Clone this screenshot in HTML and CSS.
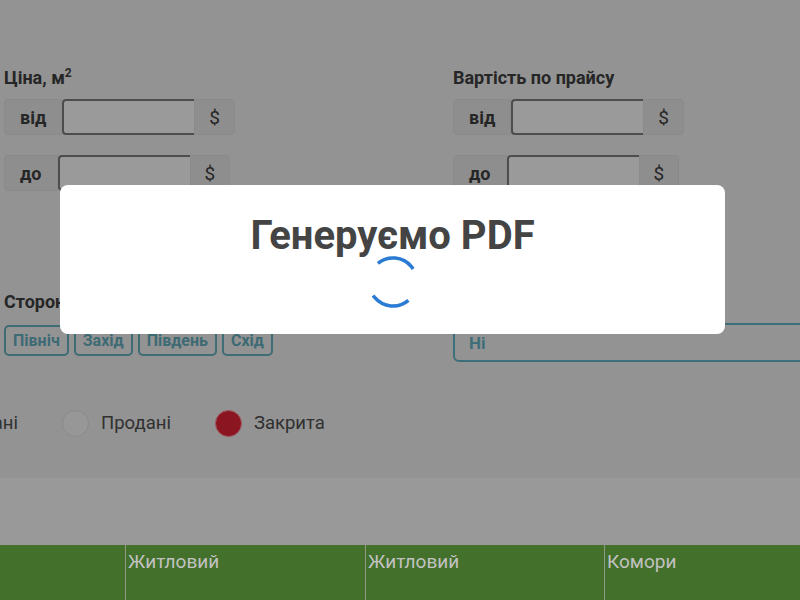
FILE: index.html
```html
<!DOCTYPE html>
<html lang="uk">
<head>
    <meta charset="UTF-8">
    <meta name="viewport" content="width=device-width, initial-scale=1.0">
    <title>Фільтри</title>
    <link rel="stylesheet" href="styles.css">
</head>
<body>

<div class="page">
    <!-- Filters -->
    <div class="filters">
        <div class="filter-col">
            <div class="filter-label">Ціна, м<sup>2</sup></div>
            <div class="input-group">
                <span class="addon">від</span>
                <input class="field" type="text">
                <span class="addon addon-end">$</span>
            </div>
            <div class="input-group">
                <span class="addon">до</span>
                <input class="field" type="text">
                <span class="addon addon-end">$</span>
            </div>
        </div>

        <div class="filter-col">
            <div class="filter-label">Вартість по прайсу</div>
            <div class="input-group">
                <span class="addon">від</span>
                <input class="field" type="text">
                <span class="addon addon-end">$</span>
            </div>
            <div class="input-group">
                <span class="addon">до</span>
                <input class="field" type="text">
                <span class="addon addon-end">$</span>
            </div>
        </div>

        <div class="filter-col">
            <div class="filter-label">Сторона світу</div>
            <div class="toggle-row">
                <button class="toggle">Північ</button>
                <button class="toggle">Захід</button>
                <button class="toggle">Південь</button>
                <button class="toggle">Схід</button>
            </div>
        </div>

        <div class="filter-col">
            <div class="filter-label">Наявність тераси</div>
            <div class="select-box">Ні</div>
        </div>
    </div>

    <!-- Legend -->
    <div class="legend">
        <div class="legend-item legend-cut">
            <span class="legend-text">Заброньовані</span>
        </div>
        <div class="legend-item">
            <span class="dot dot-sold"></span>
            <span class="legend-text">Продані</span>
        </div>
        <div class="legend-item">
            <span class="dot dot-closed"></span>
            <span class="legend-text">Закрита</span>
        </div>
    </div>

    <div class="toolbar"></div>

    <!-- Table header -->
    <div class="table-head">
        <div class="th"></div>
        <div class="th">Житловий</div>
        <div class="th">Житловий</div>
        <div class="th">Комори</div>
    </div>
</div>

<!-- PDF modal -->
<div class="modal">
    <div class="modal-title">Генеруємо PDF</div>
    <svg class="spinner" width="52" height="52" viewBox="0 0 52 52">
        <circle cx="26" cy="26" r="24" fill="none" stroke="#2a7bd3" stroke-width="3.5"
                stroke-dasharray="40 35.4" transform="rotate(50 26 26)"/>
    </svg>
</div>

</body>
</html>
```

FILE: styles.css
```css
body {
    margin: 0;
    font-family: Roboto, "Liberation Sans", sans-serif;
    background-color: #939393;
    color: #262626;
    overflow: hidden;
}
.page {
    padding-top: 67px;
}
.filters {
    display: grid;
    grid-template-columns: 449px 1fr;
    row-gap: 100px;
    padding-left: 4px;
}
.filter-label {
    font-size: 18px;
    font-weight: bold;
    line-height: 22px;
    white-space: nowrap;
}
.filter-label sup {
    font-size: 12px;
    line-height: 0;
}
.input-group {
    display: flex;
    height: 36px;
    margin-top: 10px;
}
.input-group + .input-group {
    margin-top: 20px;
}
.addon {
    display: flex;
    align-items: center;
    padding: 0 15px;
    font-size: 18px;
    font-weight: bold;
    background-color: #8e8e8e;
    border: 1px solid #8a8a8a;
    border-radius: 4px 0 0 4px;
}
.addon-end {
    padding: 0 14px;
    font-weight: normal;
    font-size: 19px;
    border-radius: 0 4px 4px 0;
}
.field {
    width: 132px;
    box-sizing: border-box;
    height: 36px;
    margin: 0;
    border: 2px solid #4d4d4d;
    border-right: none;
    border-radius: 4px 0 0 4px;
    background-color: #9a9a9a;
}
.toggle-row {
    display: flex;
    gap: 5px;
    margin-top: 12px;
}
.toggle {
    height: 31px;
    padding: 0 7px;
    font-family: Roboto, "Liberation Sans", sans-serif;
    font-size: 16px;
    font-weight: bold;
    color: #3d6a73;
    background-color: transparent;
    border: 2px solid #3f6c75;
    border-radius: 5px;
}
.select-box {
    width: 400px;
    height: 39px;
    box-sizing: border-box;
    margin-top: 10px;
    padding-left: 14px;
    display: flex;
    align-items: center;
    font-size: 17px;
    font-weight: bold;
    color: #3e6e79;
    border: 2px solid #3d6f7a;
    border-radius: 6px;
}
.legend {
    display: flex;
    align-items: center;
    gap: 44px;
    margin-top: 48px;
    height: 26px;
}
.legend-item {
    display: flex;
    align-items: center;
    gap: 12px;
    white-space: nowrap;
}
.legend-cut {
    width: 18px;
    overflow: hidden;
    justify-content: flex-end;
}
.legend-text {
    font-size: 18.5px;
    color: #303030;
}
.dot {
    width: 27px;
    height: 27px;
    box-sizing: border-box;
    border-radius: 50%;
    flex-shrink: 0;
}
.dot-sold {
    background-color: #979797;
    border: 1px solid #8a8a8a;
}
.dot-closed {
    background-color: #8b1520;
    border: 1px solid #a05a60;
}
.toolbar {
    margin-top: 42px;
    height: 67px;
    background-color: #999999;
}
.table-head {
    display: grid;
    grid-template-columns: 125px 240px 239px 1fr;
    height: 80px;
    background-color: #43702a;
}
.th {
    padding: 7px 0 0 2px;
    font-size: 19px;
    line-height: 20px;
    color: #c2c2c2;
}
.th + .th {
    border-left: 1px solid #8e9a86;
}
/* modal over the dimmed page */
.modal {
    position: fixed;
    left: 60px;
    top: 185px;
    width: 665px;
    height: 149px;
    box-sizing: border-box;
    padding-top: 33px;
    background-color: #fff;
    border-radius: 8px;
    display: flex;
    flex-direction: column;
    align-items: center;
}
.modal-title {
    font-size: 40px;
    font-weight: bold;
    line-height: 36px;
    color: #444;
}
.spinner {
    display: block;
    margin-top: 2px;
}
```
